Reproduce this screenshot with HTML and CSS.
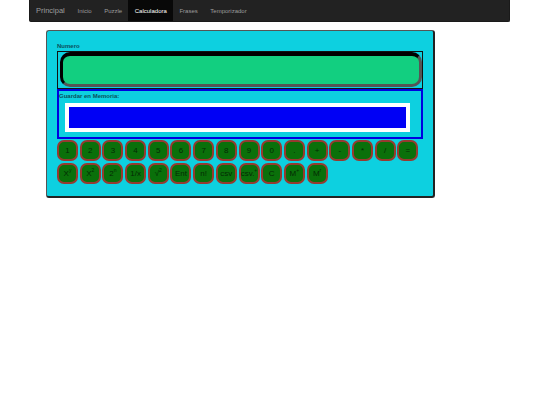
FILE: index.html
```html
<!DOCTYPE html>
<html lang="es">
<head>
    <meta charset="UTF-8">
    <meta name="viewport" content="width=device-width, initial-scale=1.0">
    <title>Calculadora</title>
    <link rel="stylesheet" href="styles.css">
</head>
<body>
    <nav class="navbar">
        <a class="brand" href="#">Principal</a>
        <a class="nav-link" href="#">Inicio</a>
        <a class="nav-link" href="#">Puzzle</a>
        <a class="nav-link active" href="#">Calculadora</a>
        <a class="nav-link" href="#">Frases</a>
        <a class="nav-link" href="#">Temporizador</a>
    </nav>
    <div class="calc">
        <label class="field-label">Numero</label>
        <div class="number-box">
            <div class="number-input"></div>
        </div>
        <div class="memory-box">
            <label class="field-label">Guardar en Memoria:</label>
            <div class="memory-input"></div>
        </div>
        <div class="keys">
            <button class="key">1</button>
            <button class="key">2</button>
            <button class="key">3</button>
            <button class="key">4</button>
            <button class="key">5</button>
            <button class="key">6</button>
            <button class="key">7</button>
            <button class="key">8</button>
            <button class="key">9</button>
            <button class="key">0</button>
            <button class="key">.</button>
            <button class="key">+</button>
            <button class="key">-</button>
            <button class="key">*</button>
            <button class="key">/</button>
            <button class="key">=</button>
            <button class="key">X<sup>y</sup></button>
            <button class="key">X<sup>2</sup></button>
            <button class="key">2<sup>n</sup></button>
            <button class="key">1/x</button>
            <button class="key">√<sup>2</sup></button>
            <button class="key">Ent</button>
            <button class="key">n!</button>
            <button class="key">csv</button>
            <button class="key">csv.<sup>+</sup></button>
            <button class="key">C</button>
            <button class="key">M<sup>+</sup></button>
            <button class="key">M<sup>r</sup></button>
        </div>
    </div>
</body>
</html>
```

FILE: styles.css
```css
body {
    margin: 0;
    background-color: #fff;
    font-family: "Liberation Sans", Arial, sans-serif;
}
.navbar {
    display: flex;
    align-items: stretch;
    width: 481px;
    height: 22px;
    margin-left: 29px;
    padding-left: 6px;
    box-sizing: border-box;
    background-color: #222;
    border: 1px solid #1a1a1a;
    border-top: none;
    border-radius: 0 0 2px 2px;
}
.navbar a {
    display: flex;
    align-items: center;
    text-decoration: none;
}
.brand {
    color: #9d9d9d;
    font-size: 7.5px;
    margin-right: 6.5px;
}
.nav-link {
    color: #9d9d9d;
    font-size: 6px;
    padding: 0 6.3px;
}
.nav-link.active {
    color: #fff;
    background-color: #080808;
}
.calc {
    width: 389px;
    height: 168px;
    margin: 8px 0 0 46px;
    padding: 11px 10px 0 10px;
    box-sizing: border-box;
    background-color: #0dd0e0;
    border: 1px solid #555;
    border-right: 2px solid #222;
    border-bottom: 2px solid #222;
    border-radius: 3px;
}
.field-label {
    display: block;
    height: 8px;
    color: #0b4f5c;
    font-size: 6px;
    font-weight: bold;
    line-height: 8px;
}
.number-box {
    height: 38px;
    box-sizing: border-box;
    margin-top: 1px;
    padding-left: 2px;
    border: 1px solid #111;
}
.number-input {
    height: 35px;
    box-sizing: border-box;
    background-color: #12cf80;
    border: 3px solid;
    border-width: 4px 3px 3px 3px;
    border-color: #000 #555 #555 #000;
    border-radius: 10px;
}
.memory-box {
    height: 50px;
    box-sizing: border-box;
    padding-top: 1px;
    border: 2px solid #0000e0;
}
.memory-input {
    width: 345px;
    height: 29px;
    box-sizing: border-box;
    margin: 3px 0 0 6px;
    background-color: #0000f5;
    border: 4px solid #fff;
}
.keys {
    display: flex;
    flex-wrap: wrap;
    gap: 2px 1.7px;
    margin-top: 1px;
}
.key {
    width: 21px;
    height: 21px;
    padding: 0;
    box-sizing: border-box;
    background-color: #0a700a;
    border: 2px solid #963a30;
    border-radius: 7px;
    color: #042a04;
    font-family: inherit;
    font-size: 8px;
    white-space: nowrap;
}
.key sup {
    font-size: 5px;
    line-height: 0;
}
```
